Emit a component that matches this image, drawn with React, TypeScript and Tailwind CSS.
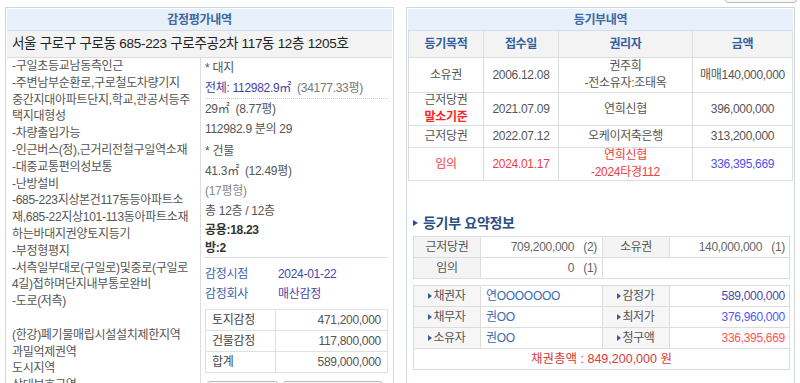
import React from "react";

const leftLines = [
  "-구일초등교남동측인근",
  "-주변남부순환로,구로철도차량기지",
  "중간지대아파트단지,학교,관공서등주",
  "택지대형성",
  "-차량출입가능",
  "-인근버스(정),근거리전철구일역소재",
  "-대중교통편의성보통",
  "-난방설비",
  "-685-223지상본건117동등아파트소",
  "재,685-22지상101-113동아파트소재",
  "하는바대지권양토지등기",
  "-부정형평지",
  "-서측일부대로(구일로)및중로(구일로",
  "4길)접하며단지내부통로완비",
  "-도로(저측)",
  "",
  "(한강)폐기물매립시설설치제한지역",
  "과밀억제권역",
  "도시지역",
  "상대보호구역",
];

function PanelHeader({ title }: { title: string }) {
  return (
    <div className="h-[22px] bg-[#e8f0fb] border-b border-[#d6dde7] flex items-center justify-center text-[#3a68a4] font-bold text-[12px]">
      {title}
    </div>
  );
}

function LeftPanel() {
  return (
    <div className="w-[389px] h-[420px] shrink-0 border border-[#cfd6df] p-[1px]">
      <PanelHeader title="감정평가내역" />
      <div className="h-[27px] bg-[#f3f3f3] border-b border-[#dddddd] flex items-center pl-[5px] text-[13.5px] text-[#222]">
        서울 구로구 구로동 685-223 구로주공2차 117동 12층 1205호
      </div>
      <div className="flex">
        <div className="w-[193px] shrink-0 pl-[5px] leading-[16.8px] text-[#555]">
          {leftLines.map((l, i) => (
            <div key={i} className="h-[16.8px] whitespace-nowrap">
              {l}
            </div>
          ))}
        </div>
        <div className="flex-1 border-l border-[#dddddd] pl-[4px] pr-[4px] text-[#555]">
          <div className="h-[20px] flex items-center">* 대지</div>
          <div className="h-[21px] flex items-center border-b border-dotted border-[#cccccc]">
            <span className="text-[#4343a6]">전체: 112982.9㎡</span>
            <span className="text-[#777]">&nbsp;&nbsp;(34177.33평)</span>
          </div>
          <div className="h-[20px] flex items-center">29㎡ &nbsp;(8.77평)</div>
          <div className="h-[19px] flex items-center">112982.9 분의 29</div>
          <div className="h-[3px]" />
          <div className="h-[20px] flex items-center">* 건물</div>
          <div className="h-[20px] flex items-center">41.3㎡ &nbsp;(12.49평)</div>
          <div className="h-[20px] flex items-center text-[#888]">(17평형)</div>
          <div className="h-[20px] flex items-center">총 12층 / 12층</div>
          <div className="h-[18px] flex items-center font-bold text-[#333]">공용:18.23</div>
          <div className="h-[19px] flex items-center font-bold text-[#333] border-b border-[#dddddd]">방:2</div>
          <div className="h-[6px]" />
          <div className="h-[20px] flex items-center">
            <span className="w-[73px] text-[#3c62ae]">감정시점</span>
            <span className="text-[#4747a8]">2024-01-22</span>
          </div>
          <div className="h-[20px] flex items-center">
            <span className="w-[73px] text-[#3c62ae]">감정회사</span>
            <span className="text-[#4747a8]">매산감정</span>
          </div>
          <div className="mt-[5px] border-t border-l border-[#e0e0e0] w-[183px]">
            {[
              ["토지감정", "471,200,000"],
              ["건물감정", "117,800,000"],
              ["합계", "589,000,000"],
            ].map(([a, b]) => (
              <div key={a} className="flex h-[21px] border-b border-[#e0e0e0]">
                <div className="w-[70px] border-r border-[#e0e0e0] flex items-center pl-[6px] text-[#444]">
                  {a}
                </div>
                <div className="flex-1 border-r border-[#e0e0e0] flex items-center justify-end pr-[6px]">
                  {b}
                </div>
              </div>
            ))}
          </div>
          <div className="flex gap-[5px] mt-[8px] pl-[2px]">
            <div className="w-[71px] h-[20px] border border-[#bbbbbb] rounded-[3px] bg-[#f8f8f8]" />
            <div className="w-[100px] h-[20px] border border-[#bbbbbb] rounded-[3px] bg-[#f8f8f8]" />
          </div>
        </div>
      </div>
    </div>
  );
}

const colW = ["w-[75px]", "w-[75px]", "w-[134px]", "flex-1"];

function Cell({
  w,
  children,
  className = "",
}: {
  w: string;
  children?: React.ReactNode;
  className?: string;
}) {
  return (
    <div
      className={`${w} border-r border-[#dddddd] flex flex-col items-center justify-center leading-[17px] ${className}`}
    >
      {children}
    </div>
  );
}

function Tri() {
  return (
    <span className="inline-block w-0 h-0 border-y-[3px] border-y-transparent border-l-[4px] border-l-[#3b5b95] mr-[1px] align-middle" />
  );
}

function RightPanel() {
  const red = "text-[#f03c3c]";
  return (
    <div className="w-[389px] h-[420px] shrink-0 border border-[#cfd6df] p-[1px]">
      <PanelHeader title="등기부내역" />
      <div className="border-l border-[#dddddd] text-[#555]">
        <div className="flex h-[27px] bg-[#f3f3f3] border-b border-[#dddddd] text-[#30609f] font-bold">
          <Cell w={colW[0]}>등기목적</Cell>
          <Cell w={colW[1]}>접수일</Cell>
          <Cell w={colW[2]}>권리자</Cell>
          <Cell w={colW[3]}>금액</Cell>
        </div>
        <div className="flex h-[35px] border-b border-[#dddddd]">
          <Cell w={colW[0]}>소유권</Cell>
          <Cell w={colW[1]}>2006.12.08</Cell>
          <Cell w={colW[2]}>
            <div>권주희</div>
            <div>-전소유자:조태옥</div>
          </Cell>
          <Cell w={colW[3]}>매매140,000,000</Cell>
        </div>
        <div className="flex h-[33px] border-b border-[#dddddd]">
          <Cell w={colW[0]}>
            <div>근저당권</div>
            <div className="text-[#ff2222] font-bold">말소기준</div>
          </Cell>
          <Cell w={colW[1]}>2021.07.09</Cell>
          <Cell w={colW[2]}>연희신협</Cell>
          <Cell w={colW[3]}>396,000,000</Cell>
        </div>
        <div className="flex h-[22px] border-b border-[#dddddd]">
          <Cell w={colW[0]}>근저당권</Cell>
          <Cell w={colW[1]}>2022.07.12</Cell>
          <Cell w={colW[2]}>오케이저축은행</Cell>
          <Cell w={colW[3]}>313,200,000</Cell>
        </div>
        <div className="flex h-[33px] border-b border-[#dddddd]">
          <Cell w={colW[0]} className={red}>
            임의
          </Cell>
          <Cell w={colW[1]} className={red}>
            2024.01.17
          </Cell>
          <Cell w={colW[2]} className={red}>
            <div>연희신협</div>
            <div>-2024타경112</div>
          </Cell>
          <Cell w={colW[3]} className="text-[#5050f0]">
            336,395,669
          </Cell>
        </div>
      </div>

      <div className="ml-[5px] mr-[3px]">
        <div className="mt-[32px] h-[20px] flex items-center text-[14px] font-bold text-[#2d4f88]">
          <span className="inline-block w-0 h-0 border-y-[3.5px] border-y-transparent border-l-[5px] border-l-[#2d4f88] mr-[5px]" />
          등기부 요약정보
        </div>
        <div className="mt-[3px] border-t border-l border-[#dddddd] text-[#555]">
          <div className="flex h-[21px] border-b border-[#dddddd]">
            <div className="w-[67px] bg-[#f4f4f4] border-r border-[#dddddd] flex items-center justify-center">근저당권</div>
            <div className="w-[122px] border-r border-[#dddddd] flex items-center justify-end pr-[5px] text-[#666]">709,200,000 &nbsp;&nbsp;(2)</div>
            <div className="w-[67px] bg-[#f4f4f4] border-r border-[#dddddd] flex items-center justify-center">소유권</div>
            <div className="flex-1 border-r border-[#dddddd] flex items-center justify-end pr-[4px] text-[#666]">140,000,000 &nbsp;&nbsp;(1)</div>
          </div>
          <div className="flex h-[21px] border-b border-[#dddddd]">
            <div className="w-[67px] bg-[#f4f4f4] border-r border-[#dddddd] flex items-center justify-center">임의</div>
            <div className="w-[122px] border-r border-[#dddddd] flex items-center justify-end pr-[5px] text-[#666]">0 &nbsp;&nbsp;(1)</div>
            <div className="flex-1 border-r border-[#dddddd]" />
          </div>
        </div>
        <div className="mt-[6px] border-t border-l border-[#dddddd] text-[#555]">
          {[
            ["채권자", "연OOOOOOO", "감정가", "589,000,000", "text-[#4848aa]"],
            ["채무자", "권OO", "최저가", "376,960,000", "text-[#5353ff]"],
            ["소유자", "권OO", "청구액", "336,395,669", "text-[#ff5555]"],
          ].map(([a, b, c, d, col]) => (
            <div key={a} className="flex h-[21px] border-b border-[#dddddd]">
              <div className="w-[67px] bg-[#f6f6f6] border-r border-[#dddddd] flex items-center justify-center">
                <Tri />
                {a}
              </div>
              <div className="w-[122px] border-r border-[#dddddd] flex items-center pl-[5px] text-[#3a6cb4]">{b}</div>
              <div className="w-[67px] bg-[#f6f6f6] border-r border-[#dddddd] flex items-center justify-center">
                <Tri />
                {c}
              </div>
              <div className={`flex-1 border-r border-[#dddddd] flex items-center justify-end pr-[4px] ${col}`}>{d}</div>
            </div>
          ))}
          <div className="flex h-[21px] border-b border-r border-[#dddddd] items-center justify-center text-[#d63a3a] text-[12.5px] tracking-[0px]">
            채권총액 : 849,200,000 원
          </div>
        </div>
        <div className="flex justify-end mt-[14px] pr-[9px]">
          <div className="w-[97px] h-[20px] border border-[#bbbbbb] rounded-[3px] bg-[#f8f8f8]" />
        </div>
      </div>
    </div>
  );
}

export default function App() {
  return (
    <div className="w-[800px] h-[383px] overflow-hidden bg-white font-['Liberation_Sans','Noto_Sans_CJK_KR',sans-serif] text-[12px] tracking-[-0.3px] text-[#555]">
      <div className="h-[7px] flex justify-end overflow-hidden">
        <div className="w-[72px] h-[10px] -mt-[7px] mr-[3px] border border-[#bbbbbb] rounded-[3px] bg-[#f8f8f8]" />
      </div>
      <div className="flex gap-[12px] pl-[5px]">
        <LeftPanel />
        <RightPanel />
      </div>
    </div>
  );
}
